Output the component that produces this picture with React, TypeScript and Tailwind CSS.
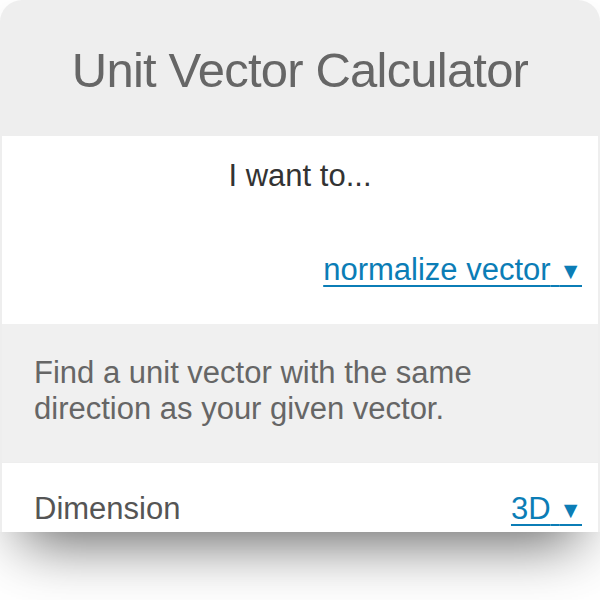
import React from 'react'

const font = { fontFamily: '"Liberation Sans", Arial, Helvetica, sans-serif' }

function Dropdown({ label }: { label: string }) {
  return (
    <span className="cursor-pointer text-[#0b7db6] underline decoration-[2px] underline-offset-[5px]">
      {label}
      {'\u00a0'}
      <span className="text-[23px] align-[1px]">▼</span>
    </span>
  )
}

export default function App() {
  return (
    <div className="w-[600px] h-[600px] bg-white overflow-hidden" style={font}>
      <div className="w-[600px] h-[532px] overflow-hidden rounded-t-[22px] bg-[#eeeeee] shadow-[0_32px_56px_-22px_rgba(0,0,0,0.62)] flex flex-col">
        {/* header */}
        <div className="h-[136px] shrink-0 pt-[42px] text-center">
          <h1 className="text-[49px] leading-[56px] tracking-[-0.8px] text-[#666666]">Unit Vector Calculator</h1>
        </div>

        {/* mode select */}
        <div className="mx-[2px] h-[188px] shrink-0 bg-white flex flex-col pt-[22px] px-[16px] text-[31px] leading-[36px]">
          <p className="text-center text-[#333333]">I want to...</p>
          <div className="mt-[58px] text-right">
            <Dropdown label="normalize vector" />
          </div>
        </div>

        {/* description */}
        <div className="mx-[2px] h-[138px] shrink-0 bg-[#f0f0f0] pt-[31px] pl-[32px] pr-[16px] text-[31px] leading-[36px] text-[#666666]">
          <p className="w-[470px]">Find a unit vector with the same direction as your given vector.</p>
        </div>

        {/* dimension */}
        <div className="mx-[2px] mt-[1px] flex-1 bg-white pt-[28px] pl-[32px] pr-[16px] text-[31px] leading-[36px]">
          <div className="flex items-baseline justify-between">
            <span className="text-[#555555]">Dimension</span>
            <Dropdown label="3D" />
          </div>
        </div>
      </div>
    </div>
  )
}
